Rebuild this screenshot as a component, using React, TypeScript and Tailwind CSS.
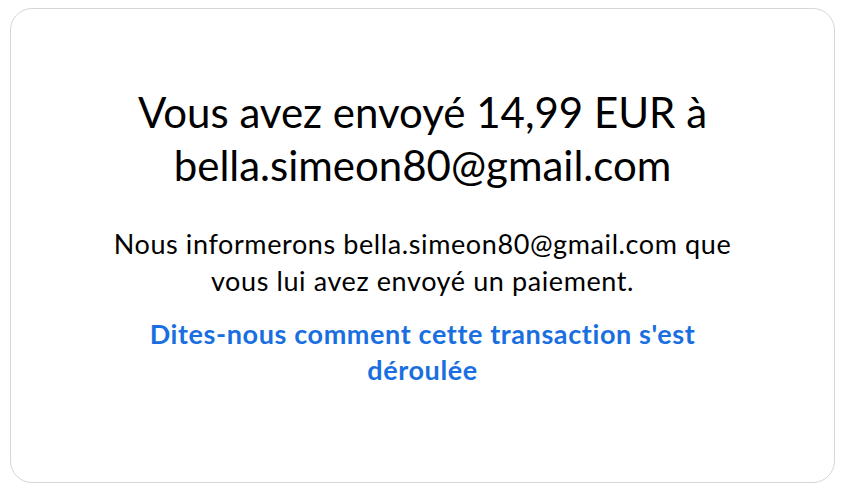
import React from "react";

export default function App() {
  return (
    <div className="w-[847px] h-[491px] bg-white pt-[8px] pb-[8px] pl-[10px] pr-[12px]" style={{ fontFamily: "Lato, 'Noto Sans', sans-serif" }}>
      <div className="h-full rounded-[22px] border border-[#d6d6d6] bg-white flex flex-col items-center pt-[77px] text-center">
        <h1 className="text-[42px] leading-[53px] text-[#000000] font-normal w-[640px]">
          Vous avez envoyé 14,99 EUR à bella.simeon80@gmail.com
        </h1>
        <p className="mt-[33px] text-[27px] leading-[37px] tracking-[0.6px] text-[#000000] w-[660px]">
          Nous informerons bella.simeon80@gmail.com que vous lui avez envoyé un paiement.
        </p>
        <a href="#" className="mt-[17px] text-[27px] leading-[36px] tracking-[0.6px] font-bold text-[#1a6fe0] w-[600px]">
          Dites-nous comment cette transaction s'est déroulée
        </a>
      </div>
    </div>
  );
}
